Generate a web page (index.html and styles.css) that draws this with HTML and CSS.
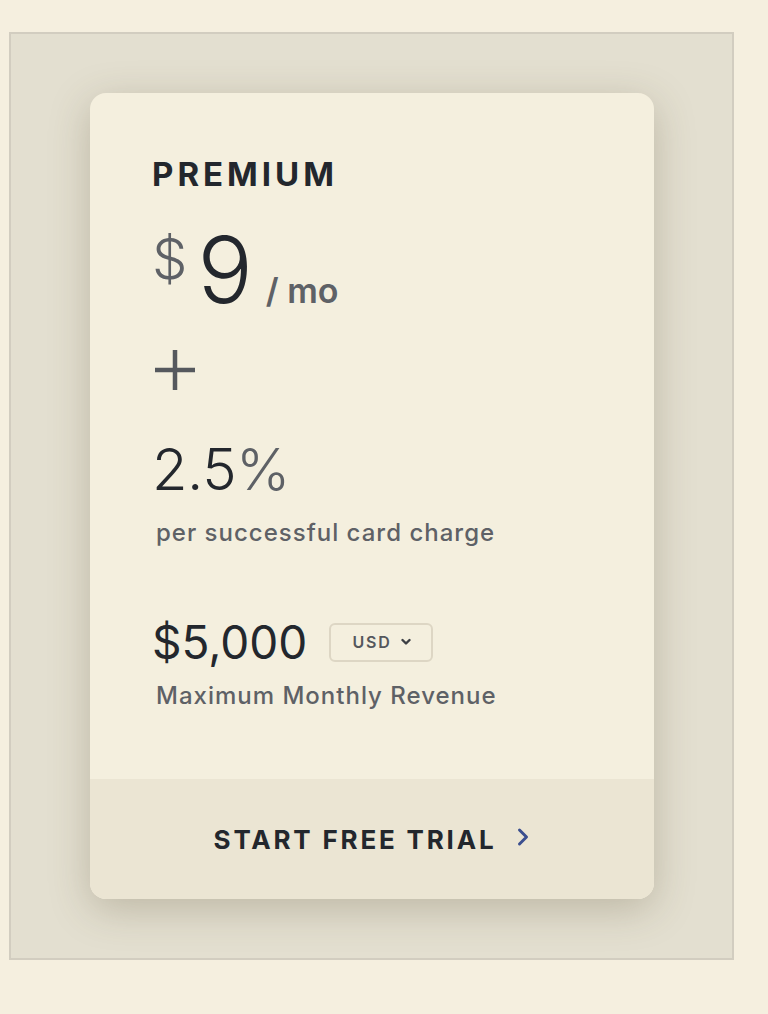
FILE: index.html
```html
<!DOCTYPE html>
<html>
<head>
<meta charset="utf-8">
<link rel="stylesheet" href="styles.css">
</head>
<body>
<div class="frame">
  <div class="card">
    <div class="card-body">
      <div class="plan">PREMIUM</div>
      <div class="price">
        <span class="cur">$</span><span class="amount">9</span><span class="per">/ mo</span>
      </div>
      <svg class="plus" width="40" height="40" viewBox="0 0 40 40" aria-label="plus"><path d="M20 0 V40 M0 20 H40" fill="none" stroke="#55585d" stroke-width="4.5"/></svg>
      <div class="rate"><span class="rate-num">2.5</span><span class="pct">%</span></div>
      <div class="sub">per successful card charge</div>
      <div class="max">
        <span class="max-num">$5,000</span>
        <span class="currency">USD
          <svg class="caret" width="10" height="8" viewBox="0 0 10 8"><path d="M1.5 2 L5 5.5 L8.5 2" fill="none" stroke="#3c3f44" stroke-width="2.4" stroke-linecap="round" stroke-linejoin="round"/></svg>
        </span>
      </div>
      <div class="sub">Maximum Monthly Revenue</div>
    </div>
    <div class="card-foot">
      <span class="cta">START FREE TRIAL</span>
      <svg class="arrow" width="14" height="20" viewBox="0 0 14 20"><path d="M3.5 3 L10.5 10 L3.5 17" fill="none" stroke="#3b4f8f" stroke-width="3" stroke-linecap="round" stroke-linejoin="round"/></svg>
    </div>
  </div>
</div>
</body>
</html>
```

FILE: styles.css
```css
html, body {
  margin: 0;
  padding: 0;
  background: #f5efdf;
}
body {
  padding: 32px 0 0 9px;
  font-family: "Inter", "Liberation Sans", sans-serif;
  color: #23272d;
}
.frame {
  box-sizing: border-box;
  width: 725px;
  height: 928px;
  border: 2px solid #d2cdc0;
  background: #e3dfd0;
  padding: 59px 0 0 79px;
}
.card {
  width: 564px;
  height: 806px;
  border-radius: 16px;
  background: #f4efde;
  box-shadow: 0 10px 40px rgba(90, 80, 50, 0.28);
  overflow: hidden;
  display: flex;
  flex-direction: column;
}
.card-body {
  flex: 1;
  padding: 61px 0 0 62px;
}
.plan {
  font-size: 33px;
  font-weight: 700;
  letter-spacing: 4px;
  line-height: 40px;
  color: #23272d;
}
.price {
  display: flex;
  align-items: baseline;
  margin-top: 31px;
  height: 90px;
}
.cur {
  font-size: 56px;
  font-weight: 300;
  color: #5e6166;
  align-self: flex-start;
  line-height: 60px;
  margin-top: 4px;
  margin-right: 10px;
}
.amount {
  font-size: 92px;
  font-weight: 300;
  line-height: 90px;
  color: #23272d;
}
.per {
  font-size: 34px;
  font-weight: 600;
  color: #5e6166;
  margin-left: 13px;
}
.plus {
  display: block;
  margin: 35px 0 0 3px;
}
.rate {
  font-size: 58px;
  font-weight: 300;
  line-height: 60px;
  margin-top: 49px;
  letter-spacing: -0.5px;
}
.rate-num { color: #23272d; }
.pct { color: #5e6166; }
.sub {
  font-size: 24px;
  font-weight: 500;
  color: #5e6166;
  margin-top: 19px;
  margin-left: 4px;
  line-height: 30px;
  letter-spacing: 1px;
}
.max {
  display: flex;
  align-items: center;
  margin-top: 69px;
}
.max-num {
  font-size: 46px;
  font-weight: 400;
  line-height: 50px;
}
.currency {
  display: inline-flex;
  align-items: center;
  gap: 9px;
  margin-left: 22px;
  height: 39px;
  box-sizing: border-box;
  padding: 0 20px 0 21px;
  border: 2px solid #ddd6c4;
  border-radius: 6px;
  font-size: 16px;
  font-weight: 600;
  letter-spacing: 1.8px;
  color: #54575c;
}
.max + .sub {
  margin-top: 14px;
}
.card-foot {
  height: 120px;
  background: #ebe5d3;
  display: flex;
  align-items: center;
  justify-content: center;
  gap: 20px;
}
.cta {
  font-size: 26px;
  font-weight: 700;
  letter-spacing: 2.8px;
  color: #23272d;
}
.arrow { margin-top: -4px; }
```
